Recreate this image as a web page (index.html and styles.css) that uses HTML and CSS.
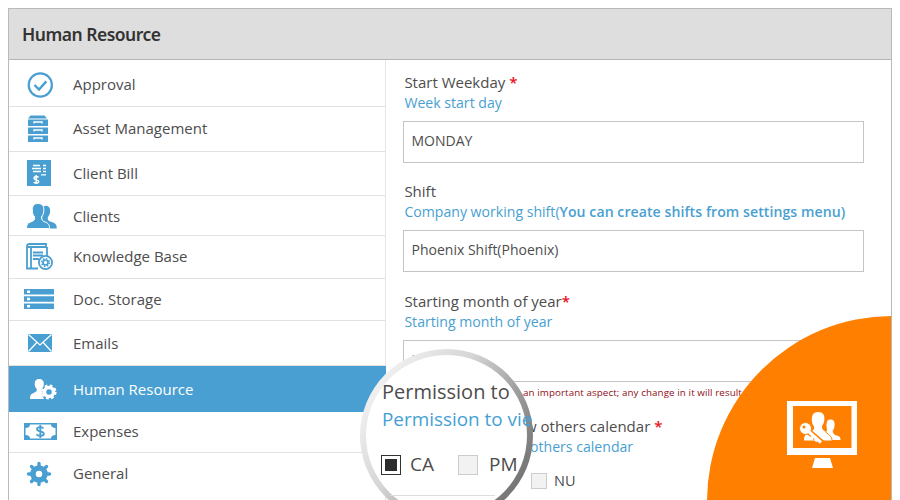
FILE: index.html
```html
<!DOCTYPE html>
<html lang="en">
<head>
<meta charset="utf-8">
<title>Human Resource</title>
<link rel="stylesheet" href="styles.css">
</head>
<body>
<main class="panel">
  <header class="panel-header"><h1>Human Resource</h1></header>
  <div class="panel-body">
    <nav class="menu">
      <a class="item h47 first"><svg class="icon" viewBox="0 0 34 30"><circle cx="17.3" cy="15" r="11.6" fill="none" stroke="#499fd1" stroke-width="2.2"/><path d="M11.5 15l4.5 4.600 7.300-8.200" fill="none" stroke="#499fd1" stroke-width="2.4"/></svg><span>Approval</span></a>
      <a class="item h45"><svg class="icon" viewBox="0 0 34 30"><path d="M7.500 1.500h14l2.500 3h-19zM5 5.500h20v6.500H5zM5 13.500h20v6.500H5zM5 21.500h20V28H5z" fill="#499fd1"/><path d="M11 9.500V8h8v1.500M11 17.500V16h8v1.500M11 25.500V24h8v1.500" fill="none" stroke="#fff" stroke-width="1.300"/></svg><span>Asset Management</span></a>
      <a class="item h44"><svg class="icon up" viewBox="0 0 34 30"><path d="M4 2h24v26H4z" fill="#499fd1"/><path d="M10 7.500h7M9 10.500h9M10 13.500h8M20 7.500h3M20 10.500h3M20 13.500h3M18 16.800h5" stroke="#fff" stroke-width="1.300"/><path d="M15.500 19.500c-1-1.500-4.500-1.300-4.500.7s4.700 1.400 4.700 3.400-4 2-5 .5M13.200 17v9" fill="none" stroke="#fff" stroke-width="1.500"/></svg><span>Client Bill</span></a>
      <a class="item h40"><svg class="icon low" viewBox="0 0 34 30"><path d="M20 4.500c4.500-2 7.500.5 7.100 5-.1 3-1.500 4.500-2.300 6-.3 3 1 3.500 4 4.500 3.500 1 5 2.500 5 6.500h-9c-.2-4-2-6-5.800-8z" fill="#499fd1"/><path d="M15 1.500c4.500 0 6.300 3 5.800 7.500-.2 3-1.500 4.500-2.300 6 0 3 1 4 3.500 5 3.500 1.200 4.500 3 4.500 6.500h-23c0-4 1.200-5.500 4.500-6.700 3-1 4-2 3.500-5C10 13 9.200 11 9.300 8c0-4 1.700-6.500 5.700-6.500z" fill="#499fd1" stroke="#fff" stroke-width="1"/></svg><span class="drop">Clients</span></a>
      <a class="item h43"><svg class="icon" viewBox="0 0 34 30"><g fill="none" stroke="#499fd1" stroke-width="1.800"><path d="M24 5v10M15 26.500H4V4c0-1.500 1-2 2.500-2H23v3H4.500M8 5v21"/><path d="M10 10.500h10M10 13.500h10M10 17h6"/><circle cx="22.500" cy="20.500" r="6.600"/></g><circle cx="22.500" cy="20.500" r="2.500" fill="none" stroke="#499fd1" stroke-width="1.700"/><circle cx="22.500" cy="20.500" r="3.900" fill="none" stroke="#499fd1" stroke-width="1.500" stroke-dasharray="1.500 1.560"/></svg><span>Knowledge Base</span></a>
      <a class="item h42"><svg class="icon up" viewBox="0 0 34 30"><path d="M1 5h30v5.500H1zM1 12.300h30v5.500H1zM1 19.500h30V25H1z" fill="#499fd1"/><path d="M4 6.400h3v2.500H4zM4 13.700h3v2.500H4zM4 21h3v2.500H4z" fill="#fff"/></svg><span>Doc. Storage</span></a>
      <a class="item h45"><svg class="icon" viewBox="0 0 34 30"><path d="M5 6h24v18H5z" fill="#499fd1"/><path d="M5.500 6.500L17 17 28.500 6.500M5.500 23.500l8.300-9M28.500 23.500l-8.300-9" fill="none" stroke="#fff" stroke-width="1.200"/></svg><span class="drop">Emails</span></a>
      <a class="item active h46"><svg class="icon" viewBox="0 0 34 30"><path d="M16.200 5c3.500 0 5 2.500 4.600 5.500-.2 2-1 3.500-2 4.500-.3 2 .2 3 1.200 3.500-1 2-.3 4.800 1.200 6.500H7c0-4 1-5.200 4-6.300 2.200-.8 3.200-1.700 2.700-3.700-1.300-1.500-2-3-2-5.500C11.700 6.700 13.200 5 16.200 5z" fill="#fff"/><circle cx="26" cy="18" r="4.500" fill="none" stroke="#fff" stroke-width="3.500"/><circle cx="26" cy="18" r="6.500" fill="none" stroke="#fff" stroke-width="2.200" stroke-dasharray="2.700 2.405"/></svg><span class="drop">Human Resource</span></a>
      <a class="item h41"><svg class="icon up" viewBox="0 0 34 30"><path d="M1 7h33v17H1z" fill="#499fd1"/><path d="M7 8.500h21c0 2 1.500 3.500 4.500 3.500v7c-3 0-4.500 1.500-4.500 3.500H7C7 20.500 5.500 19 2.500 19v-7C5.500 12 7 10.500 7 8.500z" fill="#fff"/><path d="M20.500 12.500c-1.500-2-6.500-1.800-6.500.8s6.800 1.700 6.800 4.500-5.800 2.800-7.300.5M17.300 9v13" fill="none" stroke="#499fd1" stroke-width="1.900"/></svg><span>Expenses</span></a>
      <a class="item last"><svg class="icon" viewBox="0 0 34 30"><circle cx="16" cy="15" r="6" fill="none" stroke="#499fd1" stroke-width="5.500"/><path d="M16 4.500v4M16 21.500v4M5.500 15h4M22.500 15h4M8.500 7.500l3 3M20.500 19.500l3 3M23.500 7.500l-3 3M11.500 19.500l-3 3" stroke="#499fd1" stroke-width="3.400" stroke-linecap="round"/></svg><span>General</span></a>
    </nav>
    <section class="form">
      <div class="field">
        <label>Start Weekday <b class="req">*</b></label>
        <p class="hint">Week start day</p>
        <div class="input">MONDAY</div>
      </div>
      <div class="field">
        <label>Shift</label>
        <p class="hint">Company working shift(<strong>You can create shifts from settings menu)</strong></p>
        <div class="input">Phoenix Shift(Phoenix)</div>
      </div>
      <div class="field month">
        <label>Starting month of year<b class="req">*</b></label>
        <p class="hint">Starting month of year</p>
        <div class="input">J</div>
        <p class="warning">an important aspect; any change in it will result</p>
      </div>
      <div class="field permission">
        <label>w others calendar <b class="req">*</b></label>
        <p class="hint">others calendar</p>
        <div class="option"><i class="box"></i><span>NU</span></div>
      </div>
    </section>
  </div>
  <div class="corner">
    <svg class="monitor" viewBox="0 0 70 68"><path d="M0 0h70v54H0zM6 5v42h58.500V5z" fill="#fff" fill-rule="evenodd"/><path d="M28 57h15l3 10H25z" fill="#fff"/><path d="M31 11c5 0 7 3 6.300 8-.2 3-1.300 4.500-2.300 6 0 3 .6 4 3.500 5.400 4.500 1.800 6.500 3.200 6.500 9.100H17c0-5 1.500-6 6-8.500 4-2 4.500-3 4-5.500-1.500-2-2.200-3.500-2.200-7C24.800 14 26.500 11 31 11z" fill="#fff"/><path d="M43 18c4 0 5.500 2.500 5 7-.2 2.500-1 3.500-1.800 4.800 0 2.700 1 3.500 3.300 4.200 3.500 1 4.500 2 4.500 5.500h-9c0-3.500-2-5-6.500-8.500 1-1 1.500-1.500.7-4-.7-4 .3-9 3.800-9z" fill="#fff" stroke="#ff8000" stroke-width="1"/><path d="M21 30l14 12" fill="none" stroke="#ff8000" stroke-width="6"/><circle cx="18.500" cy="27.500" r="6" fill="#fff" stroke="#ff8000" stroke-width="1"/><path d="M21 30l13 11.500M26.500 35l-2.500 2.500M30 38l-2 2" fill="none" stroke="#fff" stroke-width="3.200"/><circle cx="17" cy="26" r="1.500" fill="#ff8000"/></svg>
  </div>
</main>
<div class="lens">
  <div class="lens-view">
    <p class="lens-title">Permission to</p>
    <p class="lens-hint">Permission to vie</p>
    <div class="lens-options"><i class="big-box checked"></i><span>CA</span><i class="big-box"></i><span>PM</span></div>
    <div class="rule"></div>
  </div>
</div>
</body>
</html>
```
FILE: styles.css
```css
* { box-sizing: border-box; }
body {
  margin: 0; width: 900px; height: 500px; overflow: hidden; padding: 8px 8px 0;
  background: #fff; color: #4d4d4d; position: relative;
  font-family: "Open Sans", sans-serif; font-size: 15px;
}
h1, p { margin: 0; }
.panel { width: 884px; height: 492px; border: 1px solid #b9b9b9; border-bottom: 0; position: relative; overflow: hidden; }
.panel-header { height: 51px; background: #dedede; border-bottom: 1px solid #b5b5b5; padding: 0 0 0 13px; display: flex; align-items: center; }
h1 { font-family: "Noto Sans", sans-serif; font-size: 17.5px; font-weight: 600; letter-spacing: -0.5px; color: #333; line-height: 24px; white-space: nowrap; }
.panel-body { display: flex; height: 441px; }
.menu { width: 377px; border-right: 1px solid #e6e6e6; flex: none; }
.item { display: flex; align-items: center; border-bottom: 1px solid #e2e2e2; padding-left: 14px; gap: 16px; }
.item span { line-height: 20px; padding-bottom: 2px; white-space: nowrap; }
.item .drop { padding: 0; }
.icon { width: 34px; height: 30px; flex: none; }
.icon.up { margin-bottom: 2px; }
.icon.low { margin-top: 3px; }
.h40 { height: 40px; } .h41 { height: 41px; } .h42 { height: 42px; } .h43 { height: 43px; }
.h44 { height: 44px; } .h45 { height: 45px; } .h46 { height: 46px; } .h47 { height: 47px; }
.first { padding-top: 4px; }
.active { background: #499fd2; color: #fff; border-bottom: 0; width: 377px; }
.last { height: 42px; border: 0; }
.form { padding: 12px 0 0 17px; width: 504px; }
.field { height: 109px; white-space: nowrap; }
.field.month { height: 126px; padding-top: 1px; }
label { display: block; line-height: 21px; padding-left: 1.4px; }
.hint { color: #499fd1; font-size: 14.1px; line-height: 20px; padding-left: 1.4px; }
.hint strong { font-weight: 600; letter-spacing: 0.06px; }
.req { color: #e8101c; font-weight: 600; }
.input { width: 461px; height: 42px; border: 1px solid #c4c4c4; margin-top: 8px; padding-left: 7.5px; line-height: 38px; font-size: 14px; }
.warning { color: #8f0e16; font-size: 9.8px; letter-spacing: 0.08px; line-height: 14px; padding: 4px 0 0 120px; }
.permission label { padding-left: 122px; }
.permission .hint { padding-left: 127px; }
.option { display: flex; align-items: center; gap: 7px; margin: 14px 0 0 128px; height: 20px; font-size: 14.5px; }
.option span { padding-bottom: 1px; }
.box { width: 16px; height: 16px; background: #f2f2f2; border: 1px solid #ccc; }
.corner { position: absolute; left: 698px; top: 307px; width: 370px; height: 370px; border-radius: 50%; background: #ff8000; }
.monitor { position: absolute; left: 80px; top: 85px; width: 70px; height: 68px; }
.lens { position: absolute; left: 360px; top: 349px; width: 173px; height: 173px; border-radius: 50%; padding: 6px; background: linear-gradient(125deg, #f4f4f4 10%, #d5d5d5 40%, #a0a0a0 62%, #777 85%); }
.lens-view { width: 161px; height: 161px; border-radius: 50%; background: #fff; padding: 23px 0 0 16px; white-space: nowrap; }
.lens-title { font-size: 20px; line-height: 28px; }
.lens-hint { color: #459fd6; font-size: 18.9px; line-height: 26px; padding-bottom: 2px; }
.lens-options { display: flex; align-items: center; height: 24px; margin-top: 19px; margin-left: -1px; font-size: 19px; }
.lens-options span { padding-bottom: 2px; }
.big-box { width: 20px; height: 20px; background: #f2f2f2; border: 1px solid #ccc; margin-right: 11px; flex: none; }
.big-box.checked { border: 1px solid #333; background: #2c2c2c; box-shadow: inset 0 0 0 3px #fff; margin-right: 9px; }
.lens-options span + .big-box { margin-left: 24px; }
.rule { border-top: 1px solid #ddd; margin: 18px 0 0 8px; width: 105px; }
```
